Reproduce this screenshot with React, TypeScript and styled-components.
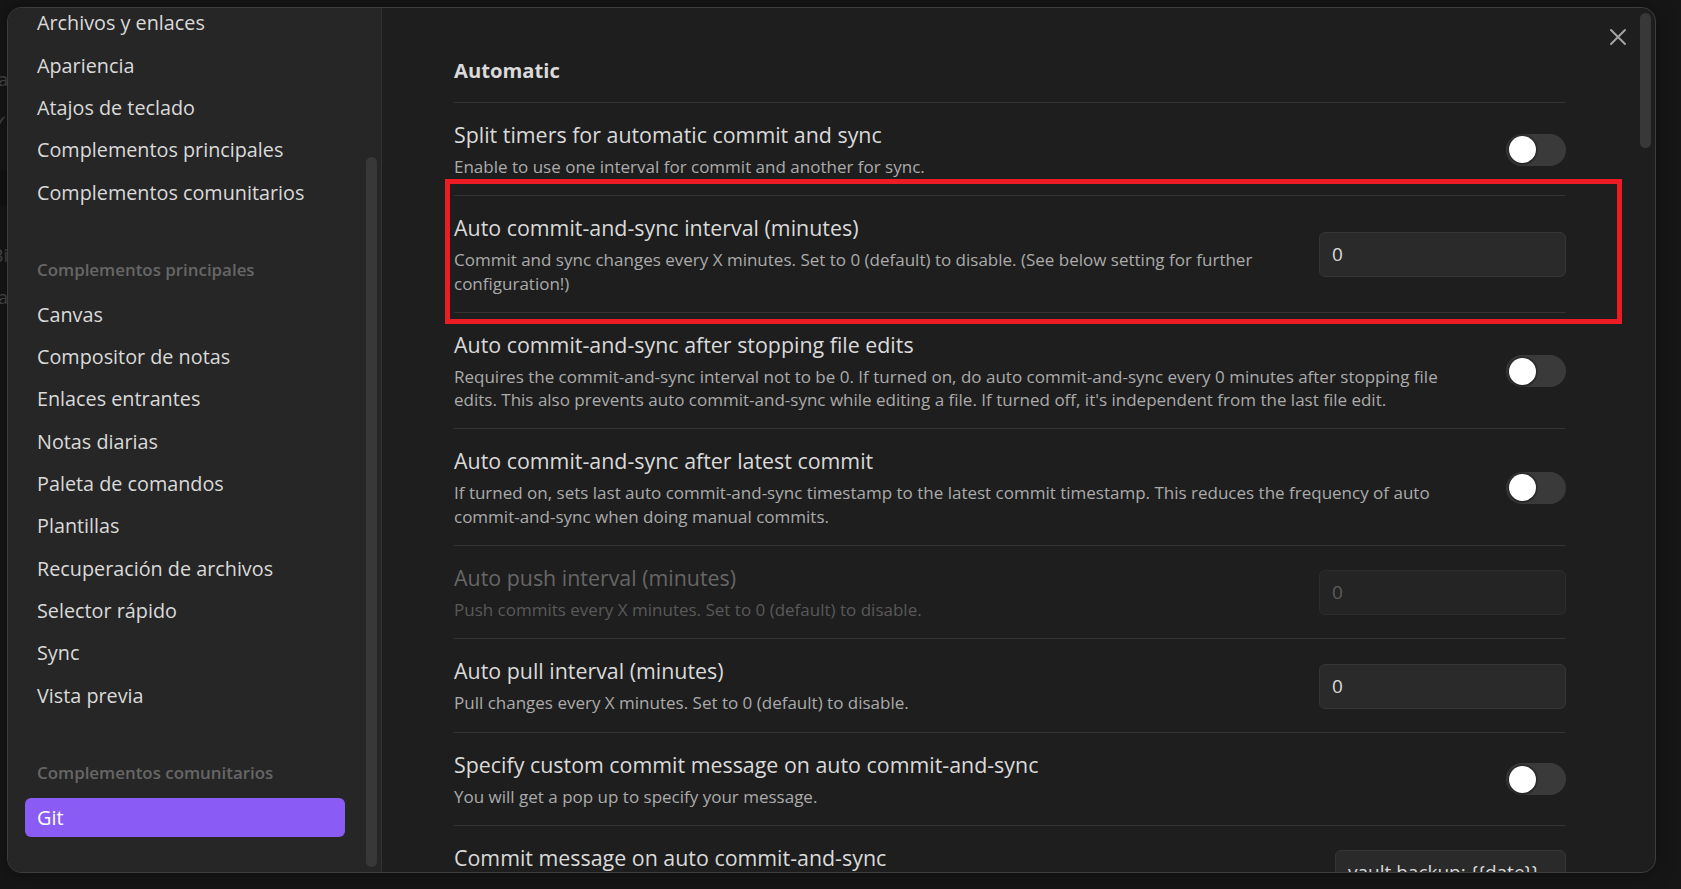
import React from "react";
import styled, { createGlobalStyle } from "styled-components";

const Global = createGlobalStyle`
  html, body { margin: 0; padding: 0; background: #161616; }
  body { font-family: "Open Sans", "Noto Sans", sans-serif; -webkit-font-smoothing: antialiased; }
  * { box-sizing: border-box; }
`;

const Page = styled.div`
  position: relative;
  width: 1681px;
  height: 889px;
  overflow: hidden;
  background: #161616;
  display: flex;
`;

const BackdropRibbon = styled.div`
  width: 8px;
  display: flex;
  flex-direction: column;
  align-items: flex-end;
  overflow: hidden;
  padding-top: 68px;
  gap: 20px;
  color: #4a4a4a;
  font-size: 18px;
  line-height: 22px;
  white-space: nowrap;
`;

const BackdropBand = styled.div`
  align-self: stretch;
  height: 36px;
  background: #121212;
  margin: 18px 0;
`;

const Modal = styled.div`
  position: absolute;
  left: 7px;
  top: 7px;
  width: 1649px;
  height: 866px;
  border: 1px solid #3d3d3d;
  border-radius: 14px;
  background: #1e1e1e;
  display: flex;
  overflow: hidden;
  box-shadow: 0 0 20px rgba(0, 0, 0, 0.4);
`;

const Sidebar = styled.nav`
  position: relative;
  flex: 0 0 374px;
  height: 100%;
  background: #262626;
  border-right: 1px solid #333333;
`;

const NavList = styled.div`
  height: 100%;
  overflow: hidden;
  display: flex;
  flex-direction: column;
  justify-content: flex-end;
  padding: 0 36px 35px 17px;
`;

const GroupTitle = styled.div`
  flex: 0 0 auto;
  padding: 0 12px;
  margin: 43.2px 0 12.75px;
  height: 24px;
  line-height: 24px;
  font-size: 16.9px;
  font-weight: 600;
  color: #666666;
  white-space: nowrap;
`;

const NavItem = styled.div<{ $active?: boolean }>`
  flex: 0 0 39px;
  height: 39px;
  margin-bottom: 3.33px;
  padding: 0 12px;
  display: flex;
  align-items: center;
  border-radius: 6px;
  font-size: 19.8px;
  color: ${(p) => (p.$active ? "#ffffff" : "#dadada")};
  background: ${(p) => (p.$active ? "#8a5cf5" : "transparent")};
  white-space: nowrap;
  &:last-child { margin-bottom: 0; }
`;

const ScrollThumb = styled.div<{ $left: number; $top: number; $height: number }>`
  position: absolute;
  left: ${(p) => p.$left}px;
  top: ${(p) => p.$top}px;
  width: 11px;
  height: ${(p) => p.$height}px;
  border-radius: 6px;
  background: #383838;
`;

const Content = styled.div`
  position: relative;
  flex: 1 1 auto;
  height: 100%;
  overflow: hidden;
  padding: 47px 89px 0 72px;
`;

const Heading = styled.div`
  font-size: 20.2px;
  font-weight: 700;
  line-height: 30px;
  color: #dadada;
  padding-bottom: 17px;
`;

const Row = styled.div`
  display: flex;
  align-items: center;
  border-top: 1px solid #333333;
  padding: 18px 0 17px;
`;

const Info = styled.div`
  flex: 1 1 auto;
  min-width: 0;
  margin-right: 30px;
`;

const Name = styled.div<{ $disabled?: boolean }>`
  font-size: 21.4px;
  line-height: 28px;
  padding-bottom: 2px;
  color: ${(p) => (p.$disabled ? "#666666" : "#dadada")};
  white-space: nowrap;
`;

const Desc = styled.div<{ $disabled?: boolean }>`
  margin-top: 4px;
  font-size: 17px;
  line-height: 23.3px;
  color: ${(p) => (p.$disabled ? "#595959" : "#ababab")};
`;

const Control = styled.div`
  flex: 0 0 auto;
  display: flex;
  justify-content: flex-end;
`;

const Toggle = styled.div`
  width: 60px;
  height: 32px;
  border-radius: 16px;
  background: #3a3a3a;
  display: flex;
  align-items: center;
  padding-left: 2.5px;
`;

const Knob = styled.div`
  width: 27px;
  height: 27px;
  border-radius: 50%;
  background: #ffffff;
  box-shadow: 0 0 0 2px rgba(0, 0, 0, 0.18), 0 1px 2px rgba(0, 0, 0, 0.4);
`;

const TextInput = styled.div<{ $disabled?: boolean; $width?: number }>`
  width: ${(p) => p.$width ?? 247}px;
  height: 45px;
  border-radius: 6px;
  border: 1px solid ${(p) => (p.$disabled ? "#2c2c2c" : "#363636")};
  background: ${(p) => (p.$disabled ? "#242424" : "#2a2a2a")};
  color: ${(p) => (p.$disabled ? "#5c5c5c" : "#dadada")};
  font-size: 19px;
  line-height: 43px;
  padding: 0 12px;
  white-space: nowrap;
  overflow: hidden;
`;

const CloseButton = styled.div`
  position: absolute;
  left: 1602px;
  top: 21px;
  width: 32px;
  height: 32px;
  display: flex;
  align-items: center;
  justify-content: center;
  color: #a3a3a3;
`;

const Annotation = styled.div`
  position: absolute;
  left: 445px;
  top: 179px;
  width: 1177px;
  height: 145px;
  border: 5px solid #ed1c24;
  pointer-events: none;
`;

type Setting = {
  name: string;
  desc: string;
  control: "toggle" | "input";
  value?: string;
  disabled?: boolean;
  width?: number;
};

const settings: Setting[] = [
  {
    name: "Split timers for automatic commit and sync",
    desc: "Enable to use one interval for commit and another for sync.",
    control: "toggle",
  },
  {
    name: "Auto commit-and-sync interval (minutes)",
    desc: "Commit and sync changes every X minutes. Set to 0 (default) to disable. (See below setting for further configuration!)",
    control: "input",
    value: "0",
  },
  {
    name: "Auto commit-and-sync after stopping file edits",
    desc: "Requires the commit-and-sync interval not to be 0. If turned on, do auto commit-and-sync every 0 minutes after stopping file edits. This also prevents auto commit-and-sync while editing a file. If turned off, it's independent from the last file edit.",
    control: "toggle",
  },
  {
    name: "Auto commit-and-sync after latest commit",
    desc: "If turned on, sets last auto commit-and-sync timestamp to the latest commit timestamp. This reduces the frequency of auto commit-and-sync when doing manual commits.",
    control: "toggle",
  },
  {
    name: "Auto push interval (minutes)",
    desc: "Push commits every X minutes. Set to 0 (default) to disable.",
    control: "input",
    value: "0",
    disabled: true,
  },
  {
    name: "Auto pull interval (minutes)",
    desc: "Pull changes every X minutes. Set to 0 (default) to disable.",
    control: "input",
    value: "0",
  },
  {
    name: "Specify custom commit message on auto commit-and-sync",
    desc: "You will get a pop up to specify your message.",
    control: "toggle",
  },
  {
    name: "Commit message on auto commit-and-sync",
    desc: "Available placeholders: {{date}} (see below), {{hostname}} (see below).",
    control: "input",
    value: "vault backup: {{date}}",
    width: 231,
  },
];

const navTop = ["General", "Editor", "Archivos y enlaces", "Apariencia", "Atajos de teclado", "Complementos principales", "Complementos comunitarios"];
const navCore = ["Canvas", "Compositor de notas", "Enlaces entrantes", "Notas diarias", "Paleta de comandos", "Plantillas", "Recuperación de archivos", "Selector rápido", "Sync", "Vista previa"];

export default function App() {
  return (
    <>
      <Global />
      <Page>
        <BackdropRibbon>
          <span>Va</span>
          <span>✓</span>
          <BackdropBand />
          <span>Bi</span>
          <span>Pa</span>
        </BackdropRibbon>
        <Modal>
          <Sidebar>
            <NavList>
              <GroupTitle>Opciones</GroupTitle>
              {navTop.map((n) => (
                <NavItem key={n}>{n}</NavItem>
              ))}
              <GroupTitle>Complementos principales</GroupTitle>
              {navCore.map((n) => (
                <NavItem key={n}>{n}</NavItem>
              ))}
              <GroupTitle>Complementos comunitarios</GroupTitle>
              <NavItem $active>Git</NavItem>
            </NavList>
            <ScrollThumb $left={358} $top={149} $height={710} />
          </Sidebar>
          <Content>
            <Heading>Automatic</Heading>
            {settings.map((s) => (
              <Row key={s.name}>
                <Info>
                  <Name $disabled={s.disabled}>{s.name}</Name>
                  <Desc $disabled={s.disabled}>{s.desc}</Desc>
                </Info>
                <Control>
                  {s.control === "toggle" ? (
                    <Toggle>
                      <Knob />
                    </Toggle>
                  ) : (
                    <TextInput $disabled={s.disabled} $width={s.width}>
                      {s.value}
                    </TextInput>
                  )}
                </Control>
              </Row>
            ))}
            <ScrollThumb $left={1258} $top={5} $height={135} />
          </Content>
        </Modal>
        <CloseButton>
          <svg width="18" height="18" viewBox="0 0 18 18" fill="none" stroke="currentColor" strokeWidth="2" strokeLinecap="round">
            <path d="M2 2 L16 16 M16 2 L2 16" />
          </svg>
        </CloseButton>
        <Annotation />
      </Page>
    </>
  );
}
